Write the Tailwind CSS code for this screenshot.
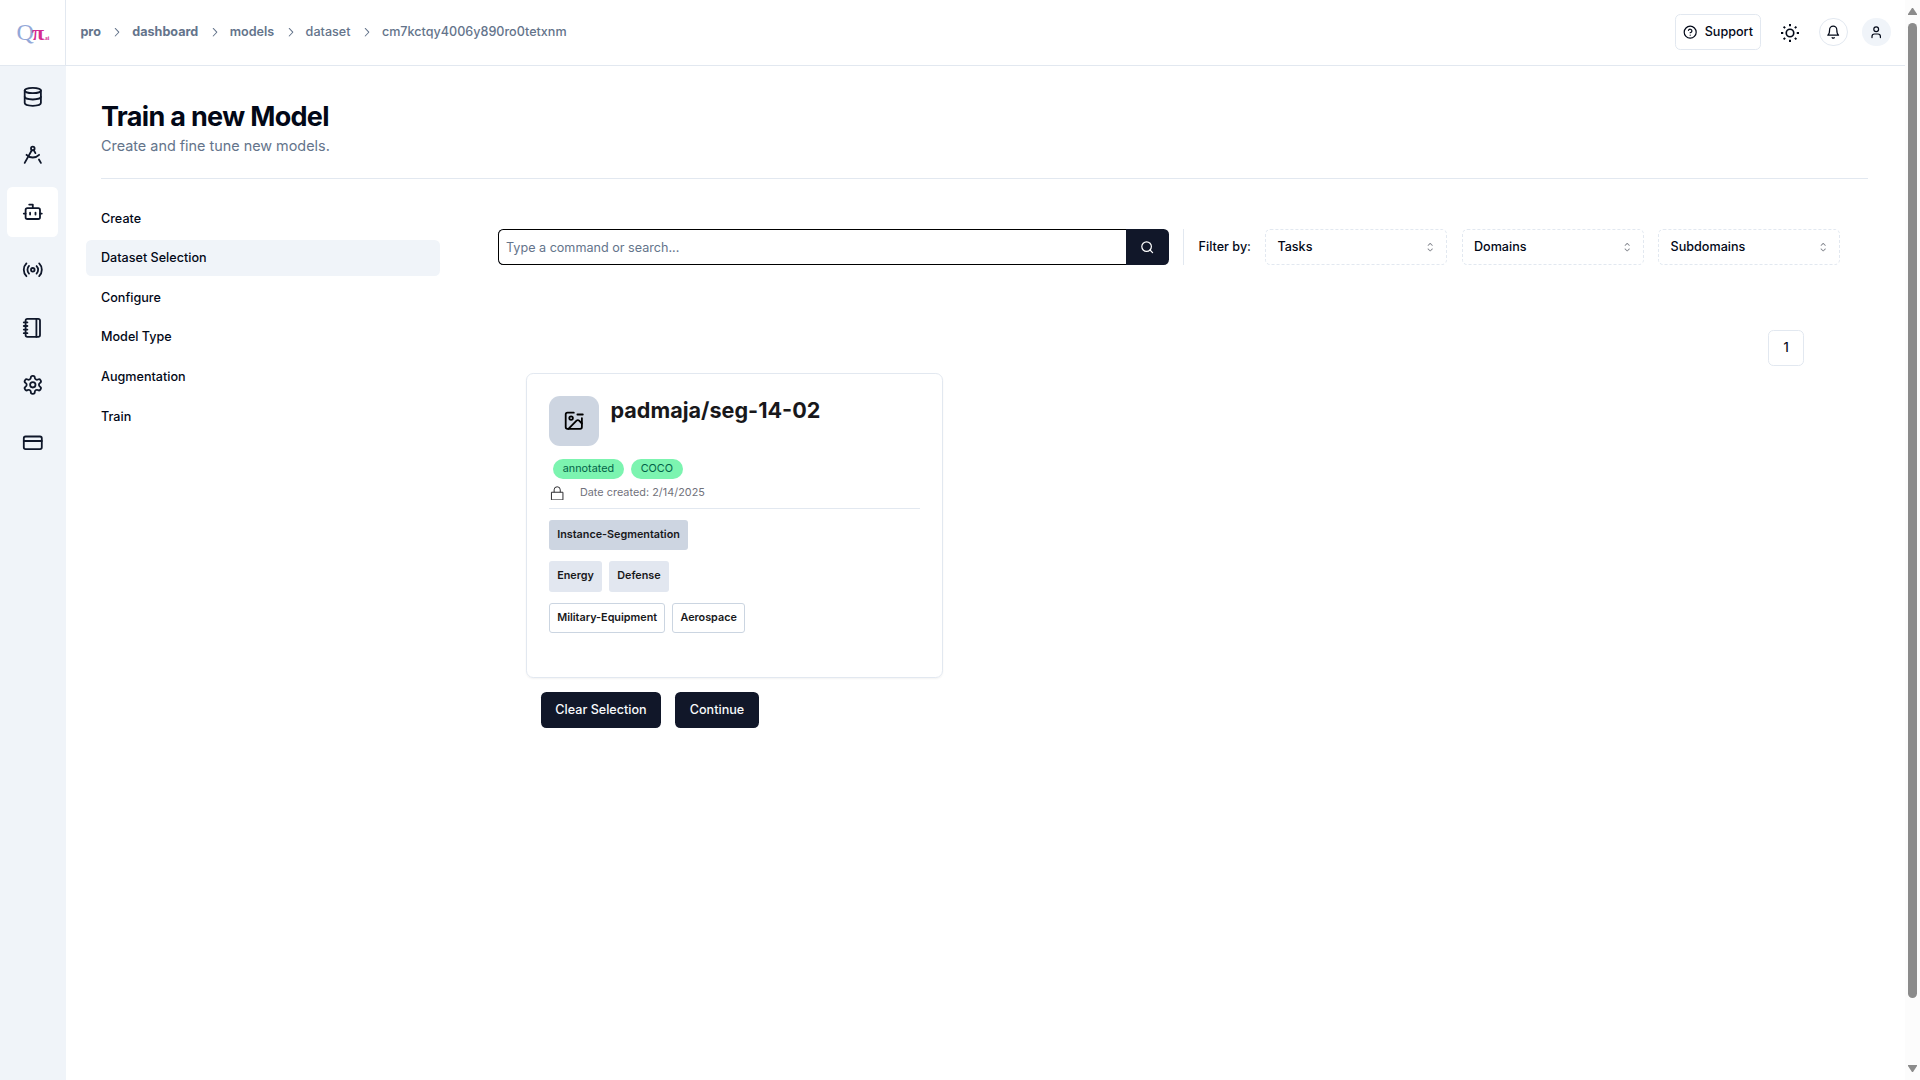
<!DOCTYPE html>
<html lang="en" class="text-[14.4px]">
<head>
<meta charset="utf-8">
<title>Train a new Model</title>
<script src="https://cdn.jsdelivr.net/npm/@tailwindcss/browser@4"></script>
</head>
<body class="flex h-screen overflow-hidden bg-white font-['Inter',sans-serif] text-[#020817]">
<svg class="hidden">
  <symbol id="chev" viewBox="0 0 15 15"><path fill="currentColor" fill-rule="evenodd" clip-rule="evenodd" d="M6.1584 3.13508C6.35985 2.94621 6.67627 2.95642 6.86514 3.15788L10.6151 7.15788C10.7954 7.3502 10.7954 7.64949 10.6151 7.84182L6.86514 11.8418C6.67627 12.0433 6.35985 12.0535 6.1584 11.8646C5.95694 11.6757 5.94673 11.3593 6.1356 11.1579L9.565 7.49985L6.1356 3.84182C5.94673 3.64036 5.95694 3.32394 6.1584 3.13508Z"/></symbol>
  <symbol id="updown" viewBox="0 0 15 15"><path fill="currentColor" fill-rule="evenodd" clip-rule="evenodd" d="M4.93179 5.43179C4.75605 5.60753 4.75605 5.89245 4.93179 6.06819C5.10753 6.24392 5.39245 6.24392 5.56819 6.06819L7.49999 4.13638L9.43179 6.06819C9.60753 6.24392 9.89245 6.24392 10.0682 6.06819C10.2439 5.89245 10.2439 5.60753 10.0682 5.43179L7.81819 3.18179C7.73379 3.0974 7.61933 3.04999 7.49999 3.04999C7.38064 3.04999 7.26618 3.0974 7.18179 3.18179L4.93179 5.43179ZM10.0682 9.56819C10.2439 9.39245 10.2439 9.10753 10.0682 8.93179C9.89245 8.75606 9.60753 8.75606 9.43179 8.93179L7.49999 10.8636L5.56819 8.93179C5.39245 8.75606 5.10753 8.75606 4.93179 8.93179C4.75605 9.10753 4.75605 9.39245 4.93179 9.56819L7.18179 11.8182C7.35753 11.9939 7.64245 11.9939 7.81819 11.8182L10.0682 9.56819Z"/></symbol>
</svg>

<aside class="flex w-[66px] shrink-0 flex-col bg-[#f0f4f9]">
  <div class="flex h-[66px] shrink-0 items-center border-r border-b border-[#e2e8f0] bg-white pb-px pl-[16.5px]">
    <div class="flex items-baseline font-['Liberation_Serif',serif] leading-none">
      <span class="text-[24px] tracking-[-1.8px] text-[#93a8d8]">Q</span><span class="text-[22px] font-bold tracking-[-0.5px] text-[#d42a91]">π</span><span class="text-[5.5px] font-bold text-[#d42a91]">.ai</span>
    </div>
  </div>
  <nav class="flex flex-col items-center gap-2 pt-[5.8px] pr-px text-[#0f172a]">
    <a class="flex size-[50.4px] items-center justify-center rounded-md"><svg class="size-6" viewBox="0 0 24 24" fill="none" stroke="currentColor" stroke-width="2" stroke-linecap="round" stroke-linejoin="round"><ellipse cx="12" cy="5" rx="9" ry="3"/><path d="M3 5v14a9 3 0 0 0 18 0V5"/><path d="M3 12a9 3 0 0 0 18 0"/></svg></a>
    <a class="flex size-[50.4px] items-center justify-center rounded-md"><svg class="size-6" viewBox="0 0 24 24" fill="none" stroke="currentColor" stroke-width="2" stroke-linecap="round" stroke-linejoin="round"><circle cx="12" cy="5" r="2"/><path d="m3 21 8.02-14.26"/><path d="m12.99 6.74 1.93 3.44"/><path d="M19 12c-3.87 4-10.13 4-14 0"/><path d="m21 21-2.16-3.84"/></svg></a>
    <a class="flex size-[50.4px] items-center justify-center rounded-md bg-white"><svg class="size-6" viewBox="0 0 24 24" fill="none" stroke="currentColor" stroke-width="2" stroke-linecap="round" stroke-linejoin="round"><path d="M12 8V4H8"/><rect width="16" height="12" x="4" y="8" rx="2"/><path d="M2 14h2"/><path d="M20 14h2"/><path d="M15 13v2"/><path d="M9 13v2"/></svg></a>
    <a class="flex size-[50.4px] items-center justify-center rounded-md"><svg class="size-6" viewBox="0 0 24 24" fill="none" stroke="currentColor" stroke-width="2" stroke-linecap="round" stroke-linejoin="round"><path d="M4.9 19.1C1 15.2 1 8.8 4.9 4.9"/><path d="M7.8 16.2c-2.3-2.3-2.3-6.1 0-8.5"/><circle cx="12" cy="12" r="2"/><path d="M16.2 7.8c2.3 2.3 2.3 6.1 0 8.5"/><path d="M19.1 4.9C23 8.8 23 15.1 19.1 19"/></svg></a>
    <a class="flex size-[50.4px] items-center justify-center rounded-md"><svg class="size-6" viewBox="0 0 24 24" fill="none" stroke="currentColor" stroke-width="2" stroke-linecap="round" stroke-linejoin="round"><path d="M2 6h4"/><path d="M2 10h4"/><path d="M2 14h4"/><path d="M2 18h4"/><rect width="16" height="20" x="4" y="2" rx="2"/><path d="M16 2v20"/></svg></a>
    <a class="flex size-[50.4px] items-center justify-center rounded-md"><svg class="size-6" viewBox="0 0 24 24" fill="none" stroke="currentColor" stroke-width="2" stroke-linecap="round" stroke-linejoin="round"><path d="M12.22 2h-.44a2 2 0 0 0-2 2v.18a2 2 0 0 1-1 1.73l-.43.25a2 2 0 0 1-2 0l-.15-.08a2 2 0 0 0-2.73.73l-.22.38a2 2 0 0 0 .73 2.73l.15.1a2 2 0 0 1 1 1.72v.51a2 2 0 0 1-1 1.74l-.15.09a2 2 0 0 0-.73 2.73l.22.38a2 2 0 0 0 2.73.73l.15-.08a2 2 0 0 1 2 0l.43.25a2 2 0 0 1 1 1.73V20a2 2 0 0 0 2 2h.44a2 2 0 0 0 2-2v-.18a2 2 0 0 1 1-1.73l.43-.25a2 2 0 0 1 2 0l.15.08a2 2 0 0 0 2.73-.73l.22-.39a2 2 0 0 0-.73-2.73l-.15-.08a2 2 0 0 1-1-1.74v-.5a2 2 0 0 1 1-1.74l.15-.09a2 2 0 0 0 .73-2.73l-.22-.38a2 2 0 0 0-2.73-.73l-.15.08a2 2 0 0 1-2 0l-.43-.25a2 2 0 0 1-1-1.73V4a2 2 0 0 0-2-2z"/><circle cx="12" cy="12" r="3"/></svg></a>
    <a class="flex size-[50.4px] items-center justify-center rounded-md"><svg class="size-6" viewBox="0 0 24 24" fill="none" stroke="currentColor" stroke-width="2" stroke-linecap="round" stroke-linejoin="round"><rect width="20" height="14" x="2" y="5" rx="2"/><path d="M2 10h20"/></svg></a>
  </nav>
</aside>

<div class="flex min-w-0 flex-1 flex-col">
  <header class="flex h-[66px] shrink-0 items-center justify-between border-b border-[#e2e8f0] pr-[14px] pb-px pl-[14.4px]">
    <nav class="flex items-center gap-[8.5px] text-sm text-[#64748b]">
      <span class="font-bold">pro</span><svg class="size-4"><use href="#chev"/></svg>
      <span class="font-bold">dashboard</span><svg class="size-4"><use href="#chev"/></svg>
      <span class="font-semibold">models</span><svg class="size-4"><use href="#chev"/></svg>
      <span class="font-medium">dataset</span><svg class="size-4"><use href="#chev"/></svg>
      <span class="font-medium">cm7kctqy4006y890ro0tetxnm</span>
    </nav>
    <div class="flex items-center">
      <button class="flex h-10 w-[86px] items-center justify-center gap-2 rounded-md border border-[#e2e8f0] text-sm font-medium"><svg class="size-4" viewBox="0 0 24 24" fill="none" stroke="currentColor" stroke-width="2" stroke-linecap="round" stroke-linejoin="round"><circle cx="12" cy="12" r="10"/><path d="M9.09 9a3 3 0 0 1 5.83 1c0 2-3 3-3 3"/><path d="M12 17h.01"/></svg>Support</button>
      <svg class="mt-px ml-[20px] size-[18px]" viewBox="0 0 24 24" fill="none" stroke="currentColor" stroke-width="2.2"><circle cx="12" cy="12" r="5"/><path stroke-width="2.6" d="M12 0v3M12 21v3M0 12h3M21 12h3M3.5 3.5l2 2M18.5 18.5l2 2M3.5 20.5l2-2M18.5 5.5l2-2"/></svg>
      <button class="ml-[20px] flex size-[28.8px] items-center justify-center rounded-full border border-[#e2e8f0]"><svg class="size-4" viewBox="0 0 24 24" fill="none" stroke="currentColor" stroke-width="2" stroke-linecap="round" stroke-linejoin="round"><path d="M6 8a6 6 0 0 1 12 0c0 7 3 9 3 9H3s3-2 3-9"/><path d="M10.3 21a1.94 1.94 0 0 0 3.4 0"/></svg></button>
      <button class="ml-[14.4px] flex size-[28.8px] items-center justify-center rounded-full bg-[#f0f4f9]"><svg class="size-4" viewBox="0 0 24 24" fill="none" stroke="currentColor" stroke-width="2" stroke-linecap="round" stroke-linejoin="round"><path d="M19 21v-2a4 4 0 0 0-4-4H9a4 4 0 0 0-4 4v2"/><circle cx="12" cy="7" r="4"/></svg></button>
    </div>
  </header>

  <main class="flex flex-1 flex-col pt-[35px] pr-[37px] pl-[35px]">
    <h1 class="text-[27px] leading-9 font-bold tracking-tight">Train a new Model</h1>
    <p class="mt-[2px] text-base leading-[21.6px] text-[#64748b]">Create and fine tune new models.</p>
    <div class="mt-[21px] h-px shrink-0 bg-[#e2e8f0]"></div>
    <div class="flex">
      <nav class="mt-[21.6px] ml-[-15px] flex w-[354px] shrink-0 flex-col gap-1 text-sm font-medium">
        <a class="flex h-10 items-center rounded-md px-[15px]">Create</a>
        <a class="flex h-10 items-center rounded-md bg-[#f0f4f9] px-[15px]">Dataset Selection</a>
        <a class="flex h-10 items-center rounded-md px-[15px]">Configure</a>
        <a class="flex h-10 items-center rounded-md px-[15px]">Model Type</a>
        <a class="flex h-10 items-center rounded-md px-[15px]">Augmentation</a>
        <a class="flex h-10 items-center rounded-md px-[15px]">Train</a>
      </nav>
      <section class="mt-[50px] ml-[58px] flex-1">
        <div class="flex h-[36px] items-center text-sm">
          <div class="flex h-[36px] w-[671px] overflow-hidden rounded-md bg-[#111729]">
            <div class="flex w-[628px] items-center rounded-l-md border border-r-0 border-black bg-white pt-[2px] pl-[7px] text-[#64748b]">Type a command or search...</div>
            <div class="flex flex-1 items-center justify-center text-white"><svg class="size-[14.4px]" viewBox="0 0 24 24" fill="none" stroke="currentColor" stroke-width="2" stroke-linecap="round" stroke-linejoin="round"><circle cx="11" cy="11" r="8"/><path d="m21 21-4.3-4.3"/></svg></div>
          </div>
          <div class="ml-[14px] h-[36px] w-px bg-[#e2e8f0]"></div>
          <span class="ml-[14.6px] w-[66.4px] font-medium">Filter by:</span>
          <div class="flex gap-[14.6px] font-medium">
            <div class="flex h-[36px] w-[182px] items-center justify-between rounded-md border border-dashed border-[#e2e8f0] px-[11.4px]">Tasks<svg class="mr-[-3px] size-[14.4px] text-[#020817]/50"><use href="#updown"/></svg></div>
            <div class="flex h-[36px] w-[182px] items-center justify-between rounded-md border border-dashed border-[#e2e8f0] px-[11.4px]">Domains<svg class="mr-[-3px] size-[14.4px] text-[#020817]/50"><use href="#updown"/></svg></div>
            <div class="flex h-[36px] w-[182px] items-center justify-between rounded-md border border-dashed border-[#e2e8f0] px-[11.4px]">Subdomains<svg class="mr-[-3px] size-[14.4px] text-[#020817]/50"><use href="#updown"/></svg></div>
          </div>
        </div>
        <div class="mt-[65px] mr-[64px] flex justify-end">
          <div class="flex size-[36px] items-center justify-center rounded-md border border-[#e2e8f0] text-sm font-medium">1</div>
        </div>
        <article class="mt-[7px] ml-[28px] flex h-[305px] w-[417px] flex-col rounded-lg border border-[#e2e8f0] px-[22px] pt-[22px] text-zinc-900 shadow-xs">
          <div class="flex gap-[11.5px]">
            <div class="flex size-[50px] items-center justify-center rounded-[11px] bg-[#cdd5e1] text-black"><svg class="size-6" viewBox="0 0 24 24" fill="none" stroke="currentColor" stroke-width="2" stroke-linecap="round" stroke-linejoin="round"><path d="M21 9v10a2 2 0 0 1-2 2H5a2 2 0 0 1-2-2V5a2 2 0 0 1 2-2h7"/><path d="M16 5h6"/><circle cx="9" cy="9" r="2"/><path d="m21 15-3.086-3.086a2 2 0 0 0-2.828 0L6 21"/></svg></div>
            <h2 class="text-[21.6px] leading-[28.8px] font-bold">padmaja/seg-14-02</h2>
          </div>
          <div class="mt-[13px] flex gap-[7px] pl-[4px] text-[10.8px] leading-[19px] text-emerald-800">
            <span class="h-[20px] rounded-full bg-[#7cf4b0] px-[9.8px]">annotated</span>
            <span class="h-[20px] rounded-full bg-[#7cf4b0] px-[9.8px]">COCO</span>
          </div>
          <div class="mt-[6px] flex h-[17px] items-center text-[10.8px] text-zinc-500">
            <svg class="mb-px ml-px size-[14.4px] text-zinc-800" viewBox="0 0 15 15" fill="none" stroke="currentColor"><path d="M1.5 6.5h12v8h-12zM4.3 6.5V4a3.2 3.2 0 0 1 6.4 0v2.5"/></svg>
            <span class="ml-[15.5px] tracking-[0.05px]">Date created: 2/14/2025</span>
          </div>
          <div class="mt-[6px] h-px shrink-0 bg-[#e2e8f0]"></div>
          <div class="mt-[11px] flex gap-[7px] text-[10.8px] leading-[29px] font-semibold">
            <span class="h-[30px] rounded-[3px] bg-[#cdd5e1] px-[8.2px]">Instance-Segmentation</span>
          </div>
          <div class="mt-[11px] flex gap-[7px] text-[10.8px] leading-[29px] font-semibold">
            <span class="h-[31px] rounded-[3px] bg-[#e2e7f0] px-[8.2px]">Energy</span>
            <span class="h-[31px] rounded-[3px] bg-[#e2e7f0] px-[8.2px]">Defense</span>
          </div>
          <div class="mt-[11px] flex gap-[7px] text-[10.8px] leading-[27px] font-semibold">
            <span class="h-[30px] rounded-[3px] border border-[#cbd5e1] px-[7.2px]">Military-Equipment</span>
            <span class="h-[30px] rounded-[3px] border border-[#cbd5e1] px-[7.2px]">Aerospace</span>
          </div>
        </article>
        <div class="mt-[14px] ml-[43px] flex gap-[14px] text-sm font-medium text-slate-50">
          <button class="h-[36px] w-[120px] rounded-md bg-[#111729]">Clear Selection</button>
          <button class="h-[36px] w-[84px] rounded-md bg-[#111729]">Continue</button>
        </div>
      </section>
    </div>
  </main>
</div>

<div class="flex w-[15px] shrink-0 flex-col items-center bg-[#fcfcfc] pt-[8px] pb-[8px] text-[#8b8b8b]">
  <svg class="h-[7px] w-[9px]" viewBox="0 0 9 7" fill="currentColor"><path d="M4 0h1l4 6v1H0V6z"/></svg>
  <div class="mt-[8px] h-[975px] w-[9px] rounded-full bg-[#8b8b8b]"></div>
  <svg class="mt-auto h-[7px] w-[9px]" viewBox="0 0 9 7" fill="currentColor"><path d="M4 7h1l4-6V0H0v1z"/></svg>
</div>
</body>
</html>
